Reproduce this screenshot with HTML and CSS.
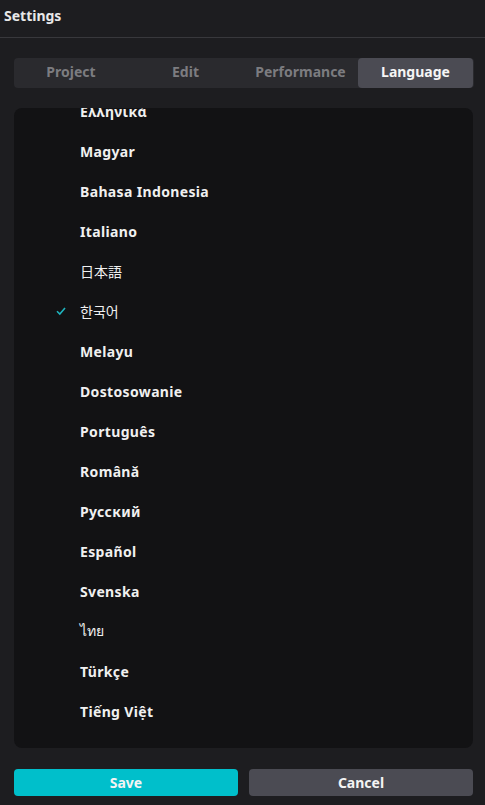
FILE: index.html
```html
<!DOCTYPE html>
<html>
<head>
<meta charset="utf-8">
<link rel="stylesheet" href="styles.css">
</head>
<body>
<div class="window">
  <header class="titlebar">Settings</header>
  <div class="content">
    <nav class="tabs">
      <div class="tab">Project</div>
      <div class="tab">Edit</div>
      <div class="tab">Performance</div>
      <div class="tab active">Language</div>
    </nav>
    <div class="panel">
      <ul class="langs">
        <li class="lang">Ελληνικά</li>
        <li class="lang">Magyar</li>
        <li class="lang">Bahasa Indonesia</li>
        <li class="lang">Italiano</li>
        <li class="lang cjk">日本語</li>
        <li class="lang cjk selected"><svg class="check" viewBox="0 0 10 10" width="10" height="10"><path d="M1 5.2 L3.8 8 L9 2" fill="none" stroke="#1fb4bf" stroke-width="1.6"/></svg>한국어</li>
        <li class="lang">Melayu</li>
        <li class="lang">Dostosowanie</li>
        <li class="lang">Português</li>
        <li class="lang">Română</li>
        <li class="lang">Русский</li>
        <li class="lang">Español</li>
        <li class="lang">Svenska</li>
        <li class="lang thai">ไทย</li>
        <li class="lang">Türkçe</li>
        <li class="lang">Tiếng Việt</li>
      </ul>
    </div>
    <div class="actions">
      <button class="btn save">Save</button>
      <button class="btn cancel">Cancel</button>
    </div>
  </div>
</div>
</body>
</html>
```
FILE: styles.css
```css
* { box-sizing: border-box; }
html, body { margin: 0; padding: 0; }
body {
  background: #1d1d20;
  font-family: "Noto Sans", "Noto Sans CJK KR", sans-serif;
  color: #f2f2f2;
  width: 485px;
  height: 805px;
  overflow: hidden;
}
.window { display: flex; flex-direction: column; height: 805px; }
.titlebar {
  height: 38px;
  padding: 6px 0 0 4px;
  font-size: 14px;
  font-weight: 700;
  color: #e8e8e8;
  border-bottom: 1px solid #38383c;
}
.content {
  flex: 1;
  display: flex;
  flex-direction: column;
  padding: 20px 12px 9px 14px;
}
.tabs {
  display: grid;
  grid-template-columns: 114px 115px 115px 115px;
  height: 30px;
  background: #2a2a2e;
  border-radius: 4px;
  width: 460px;
}
.tab {
  display: flex;
  align-items: center;
  justify-content: center;
  padding-bottom: 3px;
  font-size: 14px;
  font-weight: 700;
  color: #7c7c80;
  border-radius: 4px;
}
.tab.active { background: #4b4b53; color: #f5f5f5; }
.panel {
  margin-top: 20px;
  height: 640px;
  background: #121214;
  border-radius: 8px;
  overflow: hidden;
  width: 459px;
}
.langs {
  list-style: none;
  margin: -17px 0 0 0;
  padding: 0;
}
.lang {
  height: 40px;
  display: flex;
  align-items: center;
  padding-left: 66px;
  font-size: 14px;
  font-weight: 700;
  letter-spacing: 0.35px;
  color: #f0f0f0;
  position: relative;
}
.lang.cjk, .lang.thai { font-weight: 400; letter-spacing: 0; }
.check { position: absolute; left: 42px; top: 15px; }
.actions {
  margin-top: 21px;
  display: grid;
  grid-template-columns: 224px 224px;
  column-gap: 11px;
}
.btn {
  height: 27px;
  border: 0;
  border-radius: 4px;
  font-family: inherit;
  font-size: 14px;
  font-weight: 700;
  color: #f4f4f4;
  padding: 0;
}
.save { background: #00bfcb; }
.cancel { background: #4b4b53; }
```
